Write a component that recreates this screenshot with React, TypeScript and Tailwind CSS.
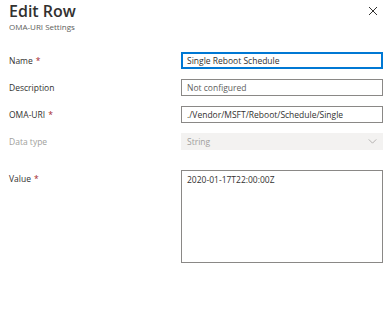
import React from 'react';

const font = { fontFamily: '"Open Sans", "Noto Sans", sans-serif' };

function Label({text, required, disabled}: {text: string; required?: boolean; disabled?: boolean}) {
    return (
        <div className={`w-[172px] shrink-0 text-[8.5px] leading-[17px] ${disabled ? 'text-[#a19f9d]' : 'text-[#323130]'}`}>
            {text}
            {required && <span className="ml-[3px] text-[#a4262c]">*</span>}
        </div>
    );
}

export default function App() {
    return (
        <div className="w-[391px] h-[322px] bg-white relative" style={font}>
            {/* Заголовок */}
            <div className="pl-[9px] pt-[2px]">
                <h1 className="text-[16px] leading-[19px] font-semibold text-[#323130]">Edit Row</h1>
                <div className="text-[8px] leading-[10px] text-[#605e5c] mt-[1px]">OMA-URI Settings</div>
            </div>
            <button className="absolute left-[368px] top-[6px] w-[10px] h-[10px] text-[#323130]">
                <svg viewBox="0 0 10 10" width="10" height="10">
                    <path d="M1 1 L9 9 M9 1 L1 9" stroke="currentColor" strokeWidth="1" fill="none"/>
                </svg>
            </button>

            {/* Форма */}
            <div className="pl-[9px] pr-[8px] mt-[20px] flex flex-col">
                <div className="flex items-center">
                    <Label text="Name" required/>
                    <div className="flex-1 h-[17px] border-2 border-[#0078d4] px-[4px] text-[8.5px] leading-[13px] text-[#323130]">Single Reboot Schedule</div>
                </div>
                <div className="flex items-center mt-[10px]">
                    <Label text="Description"/>
                    <div className="flex-1 h-[17px] border border-[#8a8886] px-[5px] text-[8.5px] leading-[15px] text-[#605e5c]">Not configured</div>
                </div>
                <div className="flex items-center mt-[10px]">
                    <Label text="OMA-URI" required/>
                    <div className="flex-1 h-[17px] border border-[#8a8886] px-[5px] text-[8.5px] leading-[15px] text-[#323130]">./Vendor/MSFT/Reboot/Schedule/Single</div>
                </div>
                <div className="flex items-center mt-[10px]">
                    <Label text="Data type" disabled/>
                    <div className="flex-1 h-[17px] bg-[#f3f2f1] pl-[6px] pr-[6px] text-[8.5px] leading-[17px] text-[#a19f9d] flex items-center justify-between">
                        <span>String</span>
                        <svg viewBox="0 0 10 6" width="9" height="5">
                            <path d="M0.5 0.5 L5 5 L9.5 0.5" stroke="#a19f9d" strokeWidth="0.9" fill="none"/>
                        </svg>
                    </div>
                </div>
                <div className="flex items-start mt-[20px]">
                    <Label text="Value" required/>
                    <div className="flex-1 h-[93px] border border-[#8a8886] px-[5px] pt-[1px] text-[8.5px] leading-[15px] text-[#323130]">2020-01-17T22:00:00Z</div>
                </div>
            </div>
        </div>
    );
}
